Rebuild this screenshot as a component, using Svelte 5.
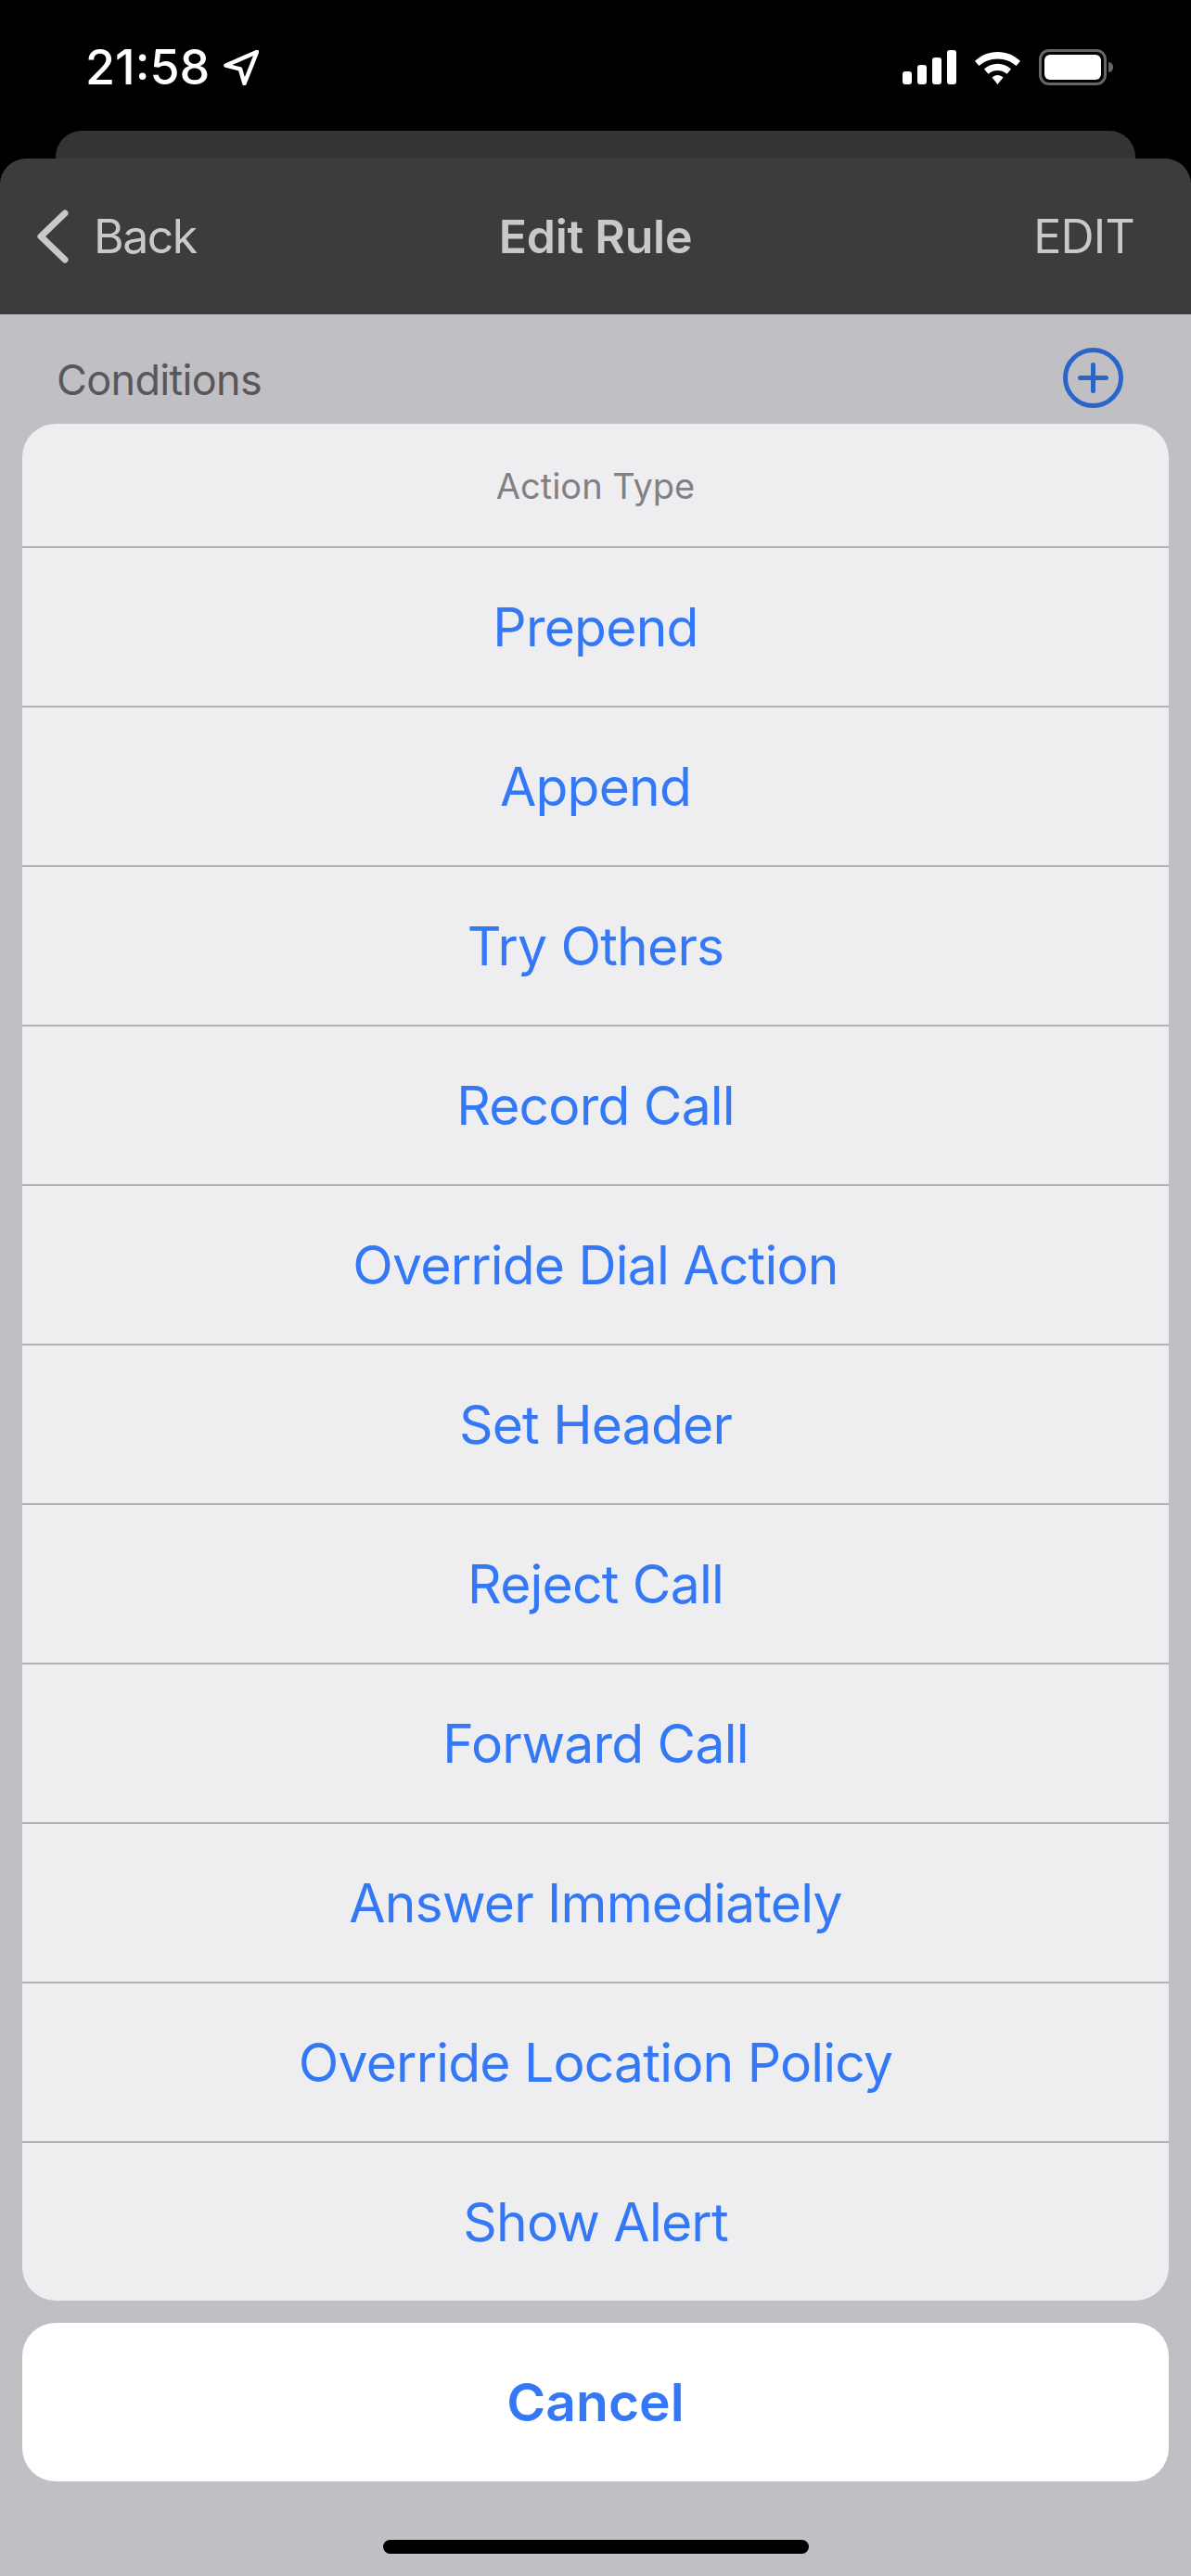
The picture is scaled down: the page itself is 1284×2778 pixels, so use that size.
<script lang="ts">
  const actions = [
    'Prepend',
    'Append',
    'Try Others',
    'Record Call',
    'Override Dial Action',
    'Set Header',
    'Reject Call',
    'Forward Call',
    'Answer Immediately',
    'Override Location Policy',
    'Show Alert'
  ];
</script>

<div class="screen">
  <div class="top">
    <div class="status">
      <div class="clock">
        <span>21:58</span>
        <svg width="38" height="38" viewBox="0 0 38 38">
          <path d="M36 2 2.5 16.5 18 20.5 22.5 36Z" fill="none" stroke="#fff" stroke-width="4.5" stroke-linejoin="round" />
        </svg>
      </div>
      <div class="indicators">
        <svg width="58" height="37" viewBox="0 0 58 37" fill="#fff">
          <rect x="0" y="23" width="10" height="14" rx="3" />
          <rect x="16" y="16" width="10" height="21" rx="3" />
          <rect x="32" y="8" width="10" height="29" rx="3" />
          <rect x="48" y="0" width="10" height="37" rx="3" />
        </svg>
        <svg class="wifi" width="49" height="35" viewBox="0 0 49 35" fill="#fff">
          <path d="M24.5 0C34 0 42.5 3.7 49 9.8L44.6 15C39.3 10.2 32.5 7.4 24.5 7.4S9.7 10.200 4.400 15L0 9.800C6.500 3.700 15 0 24.500 0Z" />
          <path d="M24.500 12.800C30 12.800 35 14.900 39 18.600L34.600 23.800C32 21.400 28.500 20 24.500 20S17 21.400 14.400 23.800L10 18.600C14 14.900 19 12.800 24.500 12.800Z" />
          <path d="M24.500 25C26.800 25 28.800 25.900 30.500 27.400L24.500 35 18.500 27.400C20.200 25.900 22.200 25 24.500 25Z" />
        </svg>
        <div class="battery">
          <div class="level"></div>
        </div>
      </div>
    </div>

    <div class="stack-edge"></div>
    <div class="nav">
      <div class="back">
        <svg width="34" height="58" viewBox="0 0 34 58">
          <path d="M30 4 4 29 30 54" fill="none" stroke="#c9c9c9" stroke-width="7" stroke-linecap="round" stroke-linejoin="round" />
        </svg>
        <span>Back</span>
      </div>
      <div class="title">Edit Rule</div>
      <div class="edit">EDIT</div>
    </div>
  </div>

  <div class="section">
    <span>Conditions</span>
    <svg width="65" height="65" viewBox="0 0 65 65" fill="none" stroke="#2c64c8" stroke-width="5">
      <circle cx="32.5" cy="32.5" r="30" />
      <path d="M32.5 18.5V46.5M18.5 32.5H46.5" stroke-linecap="round" />
    </svg>
  </div>

  <div class="overlay">
    <div class="sheet">
      <div class="sheet-title">Action Type</div>
      {#each actions as action}
        <div class="action">{action}</div>
      {/each}
    </div>
    <div class="cancel">Cancel</div>
    <div class="home"></div>
  </div>
</div>

<style>
  :global(body) {
    margin: 0;
    background: #000;
  }
  .screen {
    position: relative;
    width: 1284px;
    height: 2778px;
    overflow: hidden;
    background: #c0bfc4;
    font-family: Inter, "Liberation Sans", sans-serif;
  }
  .top {
    background: #000;
  }
  .status {
    height: 141px;
    box-sizing: border-box;
    padding: 52px 91px 0 92px;
    display: flex;
    justify-content: space-between;
    align-items: flex-start;
  }
  .clock {
    display: flex;
    align-items: center;
    gap: 15px;
    color: #fff;
    font-size: 52px;
    font-weight: 500;
    line-height: 42px;
  }
  .indicators {
    display: flex;
    align-items: center;
    gap: 20px;
    margin-top: 1px;
  }
  .wifi {
    margin-top: 2px;
  }
  .battery {
    position: relative;
    width: 73px;
    height: 39px;
    box-sizing: border-box;
    border: 3px solid #666;
    border-radius: 11px;
    padding: 3px;
  }
  .battery::after {
    content: '';
    position: absolute;
    right: -10px;
    top: 11px;
    width: 5px;
    height: 11px;
    border-radius: 0 5px 5px 0;
    background: #666;
  }
  .level {
    height: 100%;
    background: #fff;
    border-radius: 6px;
  }
  .stack-edge {
    height: 30px;
    margin: 0 60px;
    background: #343434;
    border-radius: 28px 28px 0 0;
  }
  .nav {
    height: 168px;
    box-sizing: border-box;
    padding: 0 40px;
    background: #3c3c3c;
    border-radius: 28px 28px 0 0;
    display: grid;
    grid-template-columns: 1fr auto 1fr;
    align-items: center;
    color: #c9c9c9;
    font-size: 50px;
  }
  .back {
    display: flex;
    align-items: center;
    gap: 27px;
    letter-spacing: -0.03em;
  }
  .title {
    font-weight: 600;
    letter-spacing: -0.005em;
  }
  .edit {
    justify-self: end;
    padding-right: 21px;
    letter-spacing: -0.015em;
  }
  .section {
    display: flex;
    justify-content: space-between;
    align-items: center;
    padding: 36px 73px 0 61px;
    color: #58585a;
    font-size: 45px;
    letter-spacing: -0.015em;
  }
  .section span {
    padding-top: 4px;
  }
  .overlay {
    position: absolute;
    left: 24px;
    right: 24px;
    top: 457px;
    display: flex;
    flex-direction: column;
  }
  .sheet {
    background: #eeeef0;
    border-radius: 36px;
    overflow: hidden;
  }
  .sheet-title {
    height: 132px;
    padding-top: 2px;
    box-sizing: border-box;
    display: flex;
    align-items: center;
    justify-content: center;
    color: #818185;
    font-size: 38px;
  }
  .action {
    height: 170px;
    border-top: 2px solid #b3b3b6;
    display: flex;
    align-items: center;
    justify-content: center;
    color: #3478f6;
    font-size: 57px;
    letter-spacing: -0.014em;
  }
  .cancel {
    height: 171px;
    margin-top: 24px;
    background: #fff;
    border-radius: 36px;
    display: flex;
    align-items: center;
    justify-content: center;
    color: #3478f6;
    font-size: 57px;
    font-weight: 600;
  }
  .home {
    width: 459px;
    height: 15px;
    margin: 63px auto 0;
    background: #000;
    border-radius: 8px;
  }
</style>
